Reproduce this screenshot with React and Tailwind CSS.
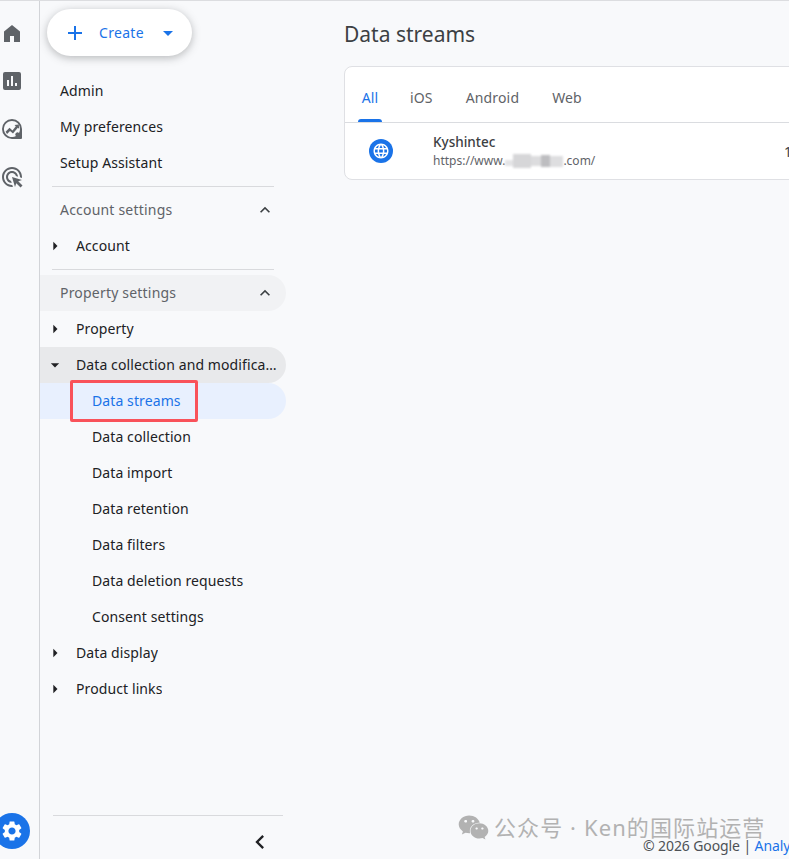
import React from "react";
import { MdAdd, MdArrowDropDown, MdArrowRight, MdChevronLeft, MdExpandLess, MdLanguage, MdSettings } from "react-icons/md";
import { FaWeixin } from "react-icons/fa";

function RailIcon({ children }) {
  return (
    <div className="h-12 w-full flex items-center justify-center text-[#5f6368]">
      <svg viewBox="0 0 24 24" width="24" height="24" fill="currentColor">{children}</svg>
    </div>
  );
}

function Rail() {
  return (
    <div className="w-[40px] shrink-0 border-r border-[#d2d4d8] flex flex-col relative overflow-hidden">
      <div className="pt-[8px] pr-[15px] flex flex-col">
        <RailIcon><path d="M4 21V10.5L12 4l8 6.5V21h-6v-6h-4v6z" /></RailIcon>
        <RailIcon>
          <path d="M5 3h14a2 2 0 0 1 2 2v14a2 2 0 0 1-2 2H5a2 2 0 0 1-2-2V5a2 2 0 0 1 2-2zm2 8v6h2v-6zm4-4v10h2V7zm4 7v3h2v-3z" />
        </RailIcon>
        <RailIcon>
          <path d="M12 2a10 10 0 1 0 0 20h9a1 1 0 0 0 1-1v-9A10 10 0 0 0 12 2zm0 2a8 8 0 0 1 8 8 8 8 0 0 1-1 3.9 2 2 0 0 0-3 3A8 8 0 1 1 12 4z" />
          <path d="M5.6 14.8l3.9-4 3 2.6 3.3-4.2-1.3-1.1 4.3-.6.3 4.3-1.3-1.1-4.8 5.800-3-2.600-2.900 3z" />
        </RailIcon>
        <RailIcon>
          <path d="M11.71,17.99C8.53,17.84,6,15.22,6,12c0-3.31,2.69-6,6-6c3.22,0,5.84,2.53,5.99,5.71l-2.1-0.63C15.48,9.31,13.89,8,12,8 c-2.21,0-4,1.79-4,4c0,1.89,1.31,3.48,3.08,3.89L11.71,17.99z M22,12c0,0.3-0.01,0.6-0.04,0.9l-1.97-0.59C20,12.21,20,12.1,20,12 c0-4.42-3.58-8-8-8s-8,3.58-8,8s3.58,8,8,8c0.1,0,0.21,0,0.31-0.01l0.59,1.97C12.6,21.99,12.3,22,12,22C6.48,22,2,17.52,2,12 C2,6.48,6.48,2,12,2S22,6.48,22,12z M18.23,16.26L22,15l-10-3l3,10l1.26-3.77l4.27,4.27l1.98-1.98L18.23,16.26z" />
        </RailIcon>
      </div>
      <div className="mt-auto mb-[10px] ml-[-6px] w-[36px] h-[36px] rounded-full bg-[#1a73e8] flex items-center justify-center text-white">
        <MdSettings size={24} />
      </div>
    </div>
  );
}

function Row({ children }) {
  return <div className="h-9 flex items-center pl-[20px] pb-[1px] text-[#202124]">{children}</div>;
}

function SectionHead({ label, active }) {
  return (
    <div className={`h-9 flex items-center justify-between pl-[20px] pr-[11px] text-[#5f6368] rounded-r-full ${active ? "bg-[#f1f2f4]" : ""}`}>
      <span className="pb-[1px] tracking-[0.2px]">{label}</span>
      <MdExpandLess size={20} className="text-[#3c4043]" />
    </div>
  );
}

function TreeRow({ label, open }) {
  return (
    <div className={`h-9 flex items-center pl-[5px] pr-[9px] text-[#202124] rounded-r-full ${open ? "bg-[#e8e9eb]" : ""}`}>
      {open
        ? <MdArrowDropDown size={20} className="shrink-0 text-[#202124]" />
        : <MdArrowRight size={20} className="shrink-0 text-[#202124]" />}
      <span className="ml-[11px] pb-[1px] truncate">{label}</span>
    </div>
  );
}

function Sidebar() {
  return (
    <div className="w-[246px] shrink-0 flex flex-col text-[14px] tracking-[0.1px] font-['Noto_Sans',sans-serif]">
      <div className="pl-[7px] pt-[8px]">
        <div className="w-[145px] h-[47px] rounded-full bg-white shadow-[0_2px_8px_rgba(60,64,67,0.35)] flex items-center pl-[16px] text-[#1a73e8]">
          <MdAdd size={24} className="shrink-0" />
          <span className="ml-[12px] tracking-[0.3px]">Create</span>
          <MdArrowDropDown size={24} className="ml-[12px] shrink-0" />
        </div>
      </div>
      <div className="mt-[17px] flex flex-col">
        <Row>Admin</Row>
        <Row>My preferences</Row>
        <Row>Setup Assistant</Row>
      </div>
      <div className="mt-[5px] mb-[5px] ml-[12px] w-[222px] border-t border-[#d9dadd]" />
      <SectionHead label="Account settings" />
      <TreeRow label="Account" />
      <div className="mt-[5px] mb-[5px] ml-[12px] w-[222px] border-t border-[#d9dadd]" />
      <SectionHead label="Property settings" active />
      <TreeRow label="Property" />
      <TreeRow label="Data collection and modification" open />
      <div className="h-9 flex items-center pl-[52px] pb-[1px] text-[#1a73e8] bg-[#e8f0fe] rounded-r-full relative">
        Data streams
        <div className="absolute left-[30px] top-[-3px] w-[128px] h-[42px] border-[3px] border-[#f9525a] rounded-[2px]" />
      </div>
      {["Data collection", "Data import", "Data retention", "Data filters", "Data deletion requests", "Consent settings"].map((item) => (
        <div key={item} className="h-9 flex items-center pl-[52px] pb-[1px] text-[#202124]">{item}</div>
      ))}
      <TreeRow label="Data display" />
      <TreeRow label="Product links" />
      <div className="mt-auto ml-[13px] w-[230px] border-t border-[#d9dadd] h-[44px] pt-[8px] flex items-center justify-end pr-[9px] text-[#202124]">
        <MdChevronLeft size={28} />
      </div>
    </div>
  );
}

function Blur() {
  return (
    <span className="inline-flex items-center h-[14px] w-[58px] blur-[1px]">
      <span className="w-[8px] h-[6px] mt-[4px] bg-[#e4e4e6]" />
      <span className="w-[18px] h-[14px] bg-[#d6d6d8]" />
      <span className="w-[10px] h-[10px] bg-[#dcdcde]" />
      <span className="w-[9px] h-[12px] bg-[#bdbdc0]" />
      <span className="w-[13px] h-[11px] bg-[#dedee0]" />
    </span>
  );
}

function Main() {
  const tabs = ["iOS", "Android", "Web"];
  return (
    <div className="flex-1 min-w-0 flex flex-col pl-[58px] font-['Noto_Sans',sans-serif]">
      <h1 className="mt-[18px] text-[21px] leading-[30px] text-[#3c4043]">Data streams</h1>
      <div className="mt-[17px] w-[700px] h-[114px] bg-white border border-[#dfe0e4] rounded-[8px]">
        <div className="h-[56px] flex border-b border-[#dadce0] text-[14px] tracking-[0.15px] text-[#5f6368]">
          <div className="ml-[13px] w-[24px] h-full pt-[5px] flex items-center justify-center relative text-[#1a73e8]">
            All
            <div className="absolute bottom-0 left-0 right-0 h-[3px] rounded-t-[3px] bg-[#1a73e8]" />
          </div>
          <div className="ml-[28px] pt-[5px] flex gap-[33px] items-center">
            {tabs.map((t) => <span key={t}>{t}</span>)}
          </div>
        </div>
        <div className="h-[56px] flex items-center">
          <div className="ml-[24px] w-[24px] h-[24px] rounded-full bg-[#1a73e8] flex items-center justify-center text-white shrink-0">
            <MdLanguage size={18} />
          </div>
          <div className="ml-[40px] w-[351px] shrink-0 flex flex-col">
            <span className="text-[13.5px] leading-[18px] font-medium text-[#3c4043]">Kyshintec</span>
            <span className="mt-[2px] text-[12px] leading-[16px] text-[#5f6368] flex items-center">
              https://www.<Blur />.com/
            </span>
          </div>
          <span className="text-[14px] text-[#3c4043]">1234567890</span>
        </div>
      </div>
      <div className="mt-auto pl-[299px] h-[26px] text-[14px] leading-[25px] tracking-[-0.1px] text-[#4d5156] whitespace-nowrap">
        © 2026 Google | <span className="text-[#1a73e8]">Analytics home</span>
      </div>
    </div>
  );
}

export default function App() {
  return (
    <div className="w-[789px] h-[859px] overflow-hidden relative flex bg-[#f8f9fb] border-t border-[#dcdde0] font-['Noto_Sans','Noto_Sans_CJK_SC',sans-serif]">
      <Rail />
      <Sidebar />
      <Main />
      {/* watermark over the page */}
      <div className="absolute left-[458px] top-[809px] flex items-center text-[#b2b2b2] font-['Noto_Sans','Noto_Sans_CJK_SC',sans-serif]">
        <FaWeixin size={31} />
        <span className="ml-[5px] text-[22px] leading-[34px] whitespace-nowrap tracking-[1.1px]">公众号 · Ken的国际站运营</span>
      </div>
    </div>
  );
}
